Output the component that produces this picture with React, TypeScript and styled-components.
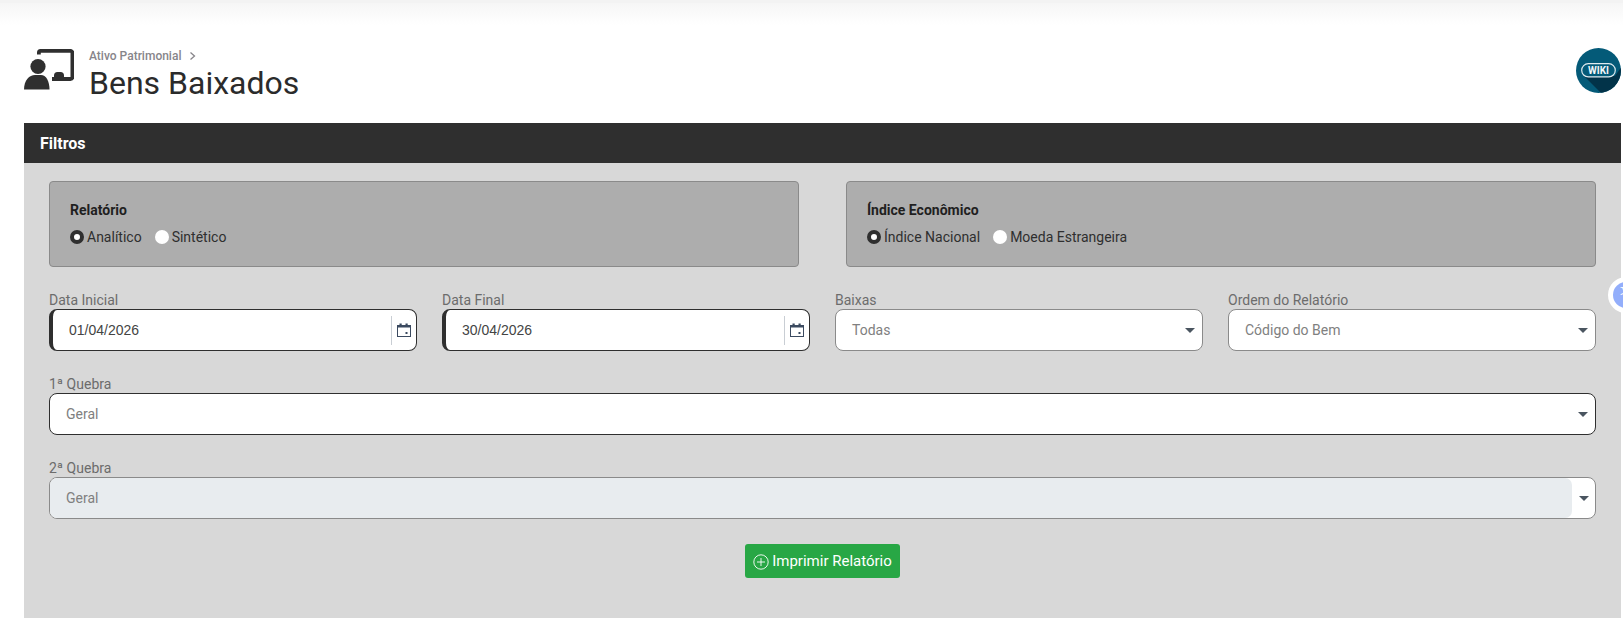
import React from "react";
import styled, { createGlobalStyle } from "styled-components";

const Global = createGlobalStyle`
  html, body { margin: 0; padding: 0; background: #fff; height: 100%; overflow: hidden; }
  body { font-family: Roboto, "Liberation Sans", sans-serif; color: #2f2f2f; }
  * { box-sizing: border-box; }
`;

const Page = styled.div`
  position: relative;
  width: 1623px;
  height: 629px;
  overflow: hidden;
  background: #fff;
`;

const TopBar = styled.div`
  position: relative;
  height: 3px;
  background: #f3f3f3;
  &::after {
    content: "";
    position: absolute;
    left: 0;
    right: 0;
    top: 3px;
    height: 22px;
    background: linear-gradient(#f6f6f6, #ffffff);
  }
`;

const Main = styled.main`
  position: relative;
  padding: 0 2px 0 24px;
`;

const Header = styled.header`
  height: 120px;
  display: flex;
  align-items: flex-start;
  padding-top: 46px;
`;

const HeadIcon = styled.svg`
  width: 50px;
  height: 42px;
  margin-top: -1px;
  flex: none;
`;

const Titles = styled.div`
  margin-left: 15px;
  flex: 1;
`;

const Crumb = styled.div`
  font-size: 12px;
  line-height: 14px;
  font-weight: 500;
  color: #87858a;
  display: flex;
  align-items: center;
  gap: 8px;
  height: 14px;
`;

const Title = styled.h1`
  margin: 1px 0 0;
  font-size: 32px;
  font-weight: 400;
  line-height: 38px;
  color: #2b2b2b;
`;

const Wiki = styled.svg`
  width: 45px;
  height: 45px;
  flex: none;
  margin-top: -1px;
`;

const Panel = styled.section`
  background: #d8d8d8;
  height: 495px;
`;

const PanelHead = styled.div`
  height: 40px;
  background: #2f2f2f;
  color: #fff;
  font-size: 16px;
  font-weight: 700;
  line-height: 41px;
  padding-left: 16px;
`;

const PanelBody = styled.div`
  padding: 18px 25px 0;
`;

const Groups = styled.div`
  display: grid;
  grid-template-columns: 750px 750px;
  justify-content: space-between;
  margin-bottom: 24px;
`;

const Group = styled.div`
  height: 86px;
  background: #adadad;
  border: 1px solid #8a8a8a;
  border-radius: 4px;
  padding: 19px 20px 0;
`;

const GroupTitle = styled.div`
  font-size: 14px;
  font-weight: 700;
  line-height: 18px;
  color: #1f1f1f;
  margin-bottom: 9px;
`;

const Radios = styled.div`
  display: flex;
  gap: 13px;
`;

const RadioItem = styled.label`
  display: flex;
  align-items: center;
  font-size: 14px;
  line-height: 18px;
  color: #2f2f2f;
  gap: 3px;
`;

const RadioDot = styled.span<{ $on?: boolean }>`
  width: 14px;
  height: 14px;
  border-radius: 50%;
  background: #fff;
  border: ${(p) => (p.$on ? "4px solid #2f2f2f" : "none")};
  flex: none;
`;

const FourCols = styled.div`
  display: grid;
  grid-template-columns: repeat(4, 368px);
  justify-content: space-between;
`;

const Field = styled.div<{ $top?: number }>`
  margin-top: ${(p) => p.$top ?? 0}px;
`;

const Label = styled.div`
  font-size: 14px;
  line-height: 18px;
  height: 18px;
  color: #6c6c6c;
`;

const Control = styled.div<{ $tone?: "strong" | "soft"; $bar?: boolean }>`
  position: relative;
  height: 42px;
  background: #fff;
  border-radius: 8px;
  border: 1px solid ${(p) => (p.$tone === "strong" ? "#2f2f2f" : "#8a8a8a")};
  border-left-width: ${(p) => (p.$bar ? "4px" : "1px")};
  display: flex;
  align-items: center;
  overflow: hidden;
  font-size: 14px;
`;

const DateValue = styled.span`
  flex: 1;
  padding-left: 16px;
  color: #444;
  font-family: "Liberation Sans", Arial, sans-serif;
`;

const CalSlot = styled.span`
  flex: none;
  width: 25px;
  height: 29px;
  border-left: 1px solid #c9ced4;
  display: flex;
  align-items: center;
  justify-content: center;
`;

const SelectValue = styled.span<{ $disabled?: boolean }>`
  flex: 1;
  align-self: stretch;
  display: flex;
  align-items: center;
  padding-left: 16px;
  color: #808080;
  background: ${(p) => (p.$disabled ? "#e8ecef" : "transparent")};
  border-radius: ${(p) => (p.$disabled ? "0 7px 7px 0" : "0")};
`;

const Caret = styled.span<{ $slot?: boolean }>`
  flex: none;
  width: ${(p) => (p.$slot ? "23px" : "28px")};
  display: flex;
  justify-content: center;
  padding-left: ${(p) => (p.$slot ? "0" : "4px")};
  &::after {
    content: "";
    border-left: 5.5px solid transparent;
    border-right: 5.5px solid transparent;
    border-top: 5.5px solid #4a5560;
  }
`;

const Actions = styled.div`
  display: flex;
  justify-content: center;
  margin-top: 25px;
`;

const PrintButton = styled.button`
  width: 155px;
  height: 34px;
  background: #28a745;
  color: #fff;
  border: none;
  border-radius: 3px;
  font-family: Roboto, "Liberation Sans", sans-serif;
  font-size: 15px;
  display: flex;
  align-items: center;
  justify-content: center;
  gap: 3px;
  padding: 0;
`;

const Floating = styled.div`
  position: absolute;
  left: 1608px;
  top: 277px;
  width: 36px;
  height: 36px;
  border-radius: 50%;
  background: #93aefb;
  border: 5px solid #fff;
  color: #fff;
  font-family: "Noto Sans CJK SC", sans-serif;
  font-size: 10px;
  line-height: 10px;
  padding: 3px 0 0 7px;
`;

const Calendar = () => (
  <svg width="14" height="14" viewBox="0 0 14 14" fill="none">
    <rect x="0.5" y="2.5" width="13" height="11" fill="#fff" stroke="#3b4a60" />
    <rect x="0" y="2" width="14" height="2.5" fill="#3b4a60" />
    <rect x="2.5" y="0.5" width="2.2" height="2" fill="#3b4a60" />
    <rect x="8.5" y="0.5" width="2.2" height="2" fill="#3b4a60" />
    <rect x="8.5" y="9" width="2" height="2" fill="#3b4a60" />
  </svg>
);

const Chevron = () => (
  <svg width="7" height="10" viewBox="0 0 7 10" fill="none">
    <path d="M1.5 1.5L5.5 5L1.5 8.5" stroke="#87858a" strokeWidth="1.3" />
  </svg>
);

const PlusCircle = () => (
  <svg width="16" height="16" viewBox="0 0 16 16" fill="none" style={{ marginTop: 2 }}>
    <circle cx="8" cy="8" r="7.2" stroke="#fff" strokeWidth="0.9" />
    <path d="M8 4v8M4 8h8" stroke="#fff" strokeWidth="0.9" />
  </svg>
);

export default function App() {
  return (
    <Page>
      <Global />
      <TopBar />
      <Main>
        <Header>
          <HeadIcon viewBox="4 4 50 42">
            <path
              d="M18.9 10.5V8.5a1.6 1.6 0 0 1 1.6-1.6H50.4a2 2 0 0 1 2 2V33a2 2 0 0 1-2 2H32"
              fill="none"
              stroke="#2f2f2f"
              strokeWidth="3.8"
            />
            <path d="M34 34v-2.5a3.5 3.5 0 0 1 3.5-3.5h3a3.5 3.5 0 0 1 3.5 3.5V34Z" fill="#2f2f2f" />
            <circle cx="18" cy="22.5" r="7.6" fill="#2f2f2f" />
            <path d="M4 45.5C4 36 9.5 31 15 31h6C26 31 29.5 37 29.5 45.5Z" fill="#2f2f2f" />
          </HeadIcon>
          <Titles>
            <Crumb>
              Ativo Patrimonial <Chevron />
            </Crumb>
            <Title>Bens Baixados</Title>
          </Titles>
          <Wiki viewBox="0 0 45 45">
            <defs>
              <clipPath id="wc">
                <circle cx="22.5" cy="22.5" r="22.5" />
              </clipPath>
            </defs>
            <circle cx="22.5" cy="22.5" r="22.5" fill="#045a78" />
            <path d="M8 28H39L46 18V50H30Z" fill="#023349" clipPath="url(#wc)" />
            <rect x="5.7" y="15.7" width="33.6" height="13.2" rx="6.6" fill="#045a78" stroke="#dfeaef" strokeWidth="1.2" />
            <text x="22.5" y="26.2" textAnchor="middle" fontFamily="Roboto, sans-serif" fontWeight="700" fontSize="10" fill="#f2f6f8">WIKI</text>
          </Wiki>
        </Header>
        <Panel>
          <PanelHead>Filtros</PanelHead>
          <PanelBody>
            <Groups>
              <Group>
                <GroupTitle>Relatório</GroupTitle>
                <Radios>
                  <RadioItem><RadioDot $on />Analítico</RadioItem>
                  <RadioItem><RadioDot />Sintético</RadioItem>
                </Radios>
              </Group>
              <Group>
                <GroupTitle>Índice Econômico</GroupTitle>
                <Radios>
                  <RadioItem><RadioDot $on />Índice Nacional</RadioItem>
                  <RadioItem><RadioDot />Moeda Estrangeira</RadioItem>
                </Radios>
              </Group>
            </Groups>
            <FourCols>
              <Field>
                <Label>Data Inicial</Label>
                <Control $tone="strong" $bar>
                  <DateValue>01/04/2026</DateValue>
                  <CalSlot><Calendar /></CalSlot>
                </Control>
              </Field>
              <Field>
                <Label>Data Final</Label>
                <Control $tone="strong" $bar>
                  <DateValue>30/04/2026</DateValue>
                  <CalSlot><Calendar /></CalSlot>
                </Control>
              </Field>
              <Field>
                <Label>Baixas</Label>
                <Control>
                  <SelectValue>Todas</SelectValue>
                  <Caret />
                </Control>
              </Field>
              <Field>
                <Label>Ordem do Relatório</Label>
                <Control>
                  <SelectValue>Código do Bem</SelectValue>
                  <Caret />
                </Control>
              </Field>
            </FourCols>
            <Field $top={24}>
              <Label>1ª Quebra</Label>
              <Control $tone="strong">
                <SelectValue>Geral</SelectValue>
                <Caret />
              </Control>
            </Field>
            <Field $top={24}>
              <Label>2ª Quebra</Label>
              <Control>
                <SelectValue $disabled>Geral</SelectValue>
                <Caret $slot />
              </Control>
            </Field>
            <Actions>
              <PrintButton><PlusCircle />Imprimir Relatório</PrintButton>
            </Actions>
          </PanelBody>
        </Panel>
      </Main>
      <Floating>文A</Floating>
    </Page>
  );
}
